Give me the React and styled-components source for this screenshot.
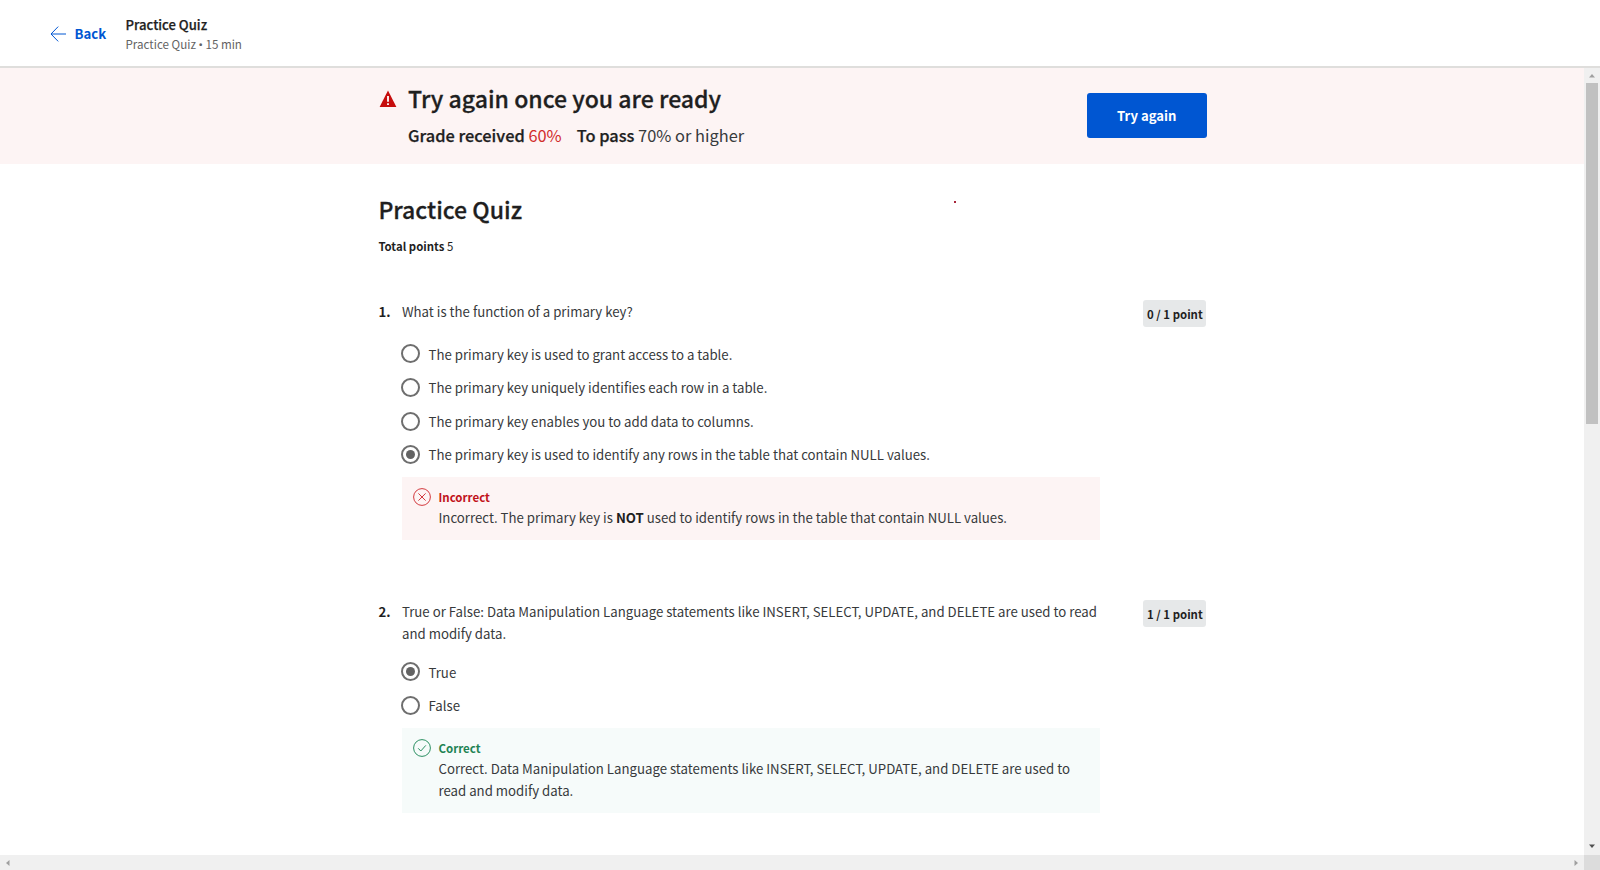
import React from "react";
import styled, { createGlobalStyle } from "styled-components";

const Global = createGlobalStyle`
  *, *::before, *::after { box-sizing: border-box; }
  body {
    margin: 0;
    background: #fff;
    color: #1f1f1f;
    font-family: "Noto Sans CJK SC", "Source Sans Pro", sans-serif;
  }
  h1, h2, p, ol, ul { margin: 0; padding: 0; }
  ol, ul { list-style: none; }
  strong { font-weight: 700; color: #1f1f1f; }
`;

const Window = styled.div`
  display: flex;
  flex-direction: column;
  width: 1600px;
  height: 870px;
  overflow: hidden;
`;

const Header = styled.header`
  display: flex;
  align-items: center;
  flex: none;
  height: 68px;
  padding-left: 49.5px;
  border-bottom: 2px solid #dfdedc;
`;

const BackLink = styled.a`
  display: flex;
  align-items: center;
  width: 76px;
  gap: 9px;
  padding-top: 1.2px;
  color: #0056d2;
  font-size: 13.2px;
  font-weight: 700;
  line-height: 20px;
`;

const HeaderTitles = styled.div`
  display: flex;
  flex-direction: column;
  padding-top: 2px;
`;

const HeaderTitle = styled.span`
  font-size: 13.1px;
  font-weight: 500;
  line-height: 20px;
  -webkit-text-stroke: 0.25px currentColor;
`;

const HeaderMeta = styled.span`
  color: #636363;
  font-size: 11.6px;
  line-height: 19px;
`;

const Bullet = styled.span`
  font-family: "Noto Sans", sans-serif;
`;

const Body = styled.div`
  display: flex;
  flex: none;
  height: 787px;
`;

const Page = styled.main`
  flex: 1;
  min-width: 0;
  position: relative;
  overflow: hidden;
`;

const Banner = styled.section`
  height: 96px;
  padding: 15px 0 0 379px;
  background: #fdf4f4;
`;

const BannerInner = styled.div`
  display: flex;
  width: 827.5px;
`;

const BannerIcon = styled.div`
  width: 29px;
  padding-top: 7px;
  line-height: 0;
`;

const BannerText = styled.div`
  flex: 1;
`;

const Heading = styled.h2`
  font-size: 23.05px;
  font-weight: 500;
  line-height: 30px;
  -webkit-text-stroke: 0.3px currentColor;
`;

const Grades = styled.p`
  display: flex;
  gap: 15px;
  margin-top: 10px;
  font-size: 16.4px;
  line-height: 24px;
  color: #373a3c;
`;

const Label = styled.span`
  color: #1f1f1f;
  font-weight: 500;
  -webkit-text-stroke: 0.25px currentColor;
`;

const Score = styled.span`
  color: #d12b2b;
`;

const RetryButton = styled.button`
  width: 119.5px;
  height: 44.5px;
  margin-top: 10px;
  padding: 0;
  border: 0;
  border-radius: 3px;
  background: #0056d2;
  color: #fff;
  font-family: inherit;
  font-size: 13.1px;
  font-weight: 700;
`;

const Quiz = styled.section`
  width: 828px;
  margin-left: 378.4px;
  padding-top: 30px;
`;

const TotalPoints = styled.p`
  margin-top: 12px;
  margin-bottom: 45px;
  font-size: 11.4px;
  line-height: 20px;
`;

const Question = styled.li`
  display: flex;
  align-items: flex-start;
  margin-bottom: 61px;
`;

const Number = styled.span`
  width: 23.6px;
  font-size: 13.2px;
  font-weight: 700;
  line-height: 22px;
`;

const QuestionBody = styled.div`
  width: 698px;
`;

const Prompt = styled.p`
  font-size: 13.23px;
  line-height: 22px;
  color: #373a3c;
`;

const Options = styled.ul`
  margin-top: ${(p) => p.$gap}px;
`;

const Option = styled.li`
  display: flex;
  align-items: center;
  gap: 8.5px;
  height: 33.6px;
  margin-left: -1px;
  font-size: 13.24px;
  line-height: 22px;
  color: #373a3c;
`;

const OptionText = styled.span`
  padding-top: 1.2px;
`;

const Radio = styled.span`
  flex: none;
  display: grid;
  place-items: center;
  width: 19px;
  height: 19px;
  border: 2px solid #6e6e6e;
  border-radius: 50%;

  &::after {
    content: "";
    width: 9px;
    height: 9px;
    border-radius: 50%;
    background: ${(p) => (p.$checked ? "#636363" : "transparent")};
  }
`;

const Feedback = styled.div`
  display: flex;
  gap: 7.5px;
  margin-top: 5.6px;
  padding: 9.9px 20px 11px 11px;
  background: ${(p) => (p.$correct ? "#f6fbfa" : "#fdf4f4")};
`;

const FeedbackIcon = styled.div`
  flex: none;
  width: 18px;
  height: 20px;
  padding-top: 1px;
  line-height: 0;
`;

const FeedbackTitle = styled.p`
  color: ${(p) => (p.$correct ? "#1f8354" : "#c1121a")};
  font-size: 11.5px;
  font-weight: 700;
  line-height: 20px;
`;

const Points = styled.span`
  display: flex;
  align-items: center;
  justify-content: center;
  width: 63px;
  height: 27px;
  margin: -1px 0 0 auto;
  border-radius: 3px;
  background: #e6e8e9;
  font-size: 11.4px;
  font-weight: 700;
  white-space: nowrap;
`;

const RedMark = styled.i`
  position: absolute;
  left: 954px;
  top: 133px;
  width: 2px;
  height: 2px;
  background: #a8263a;
`;

const VerticalBar = styled.div`
  display: flex;
  flex-direction: column;
  align-items: center;
  width: 16px;
  padding-bottom: 1.5px;
  background: #f0f0f0;
`;

const Thumb = styled.div`
  width: 12px;
  height: 341px;
  margin-bottom: auto;
  background: #c1c1c1;
`;

const ArrowCell = styled.span`
  display: grid;
  place-items: center;
  width: 16px;
  height: 15px;
`;

const HorizontalBar = styled.div`
  display: flex;
  flex: none;
  justify-content: space-between;
  height: 15px;
  background: #f0f0f0;
`;

const BarEnd = styled.div`
  display: flex;
`;

const Corner = styled.span`
  width: 16px;
  height: 15px;
  background: #dcdcdc;
`;

const ArrowLeft = () => (
  <svg width="16" height="16" viewBox="0 0 16 16" fill="none" stroke="#0056d2" strokeWidth="1">
    <path d="M8.2 0.6 1 8l7.2 7.4M1 8h15" />
  </svg>
);

const Warning = () => (
  <svg width="18" height="18" viewBox="0 0 18 18">
    <path d="M9 .6 17.4 17H.6Z" fill="#c60c0c" />
    <path d="M8.1 6h1.8v5.8H8.1zM8.1 13.2h1.8V15H8.1z" fill="#fff" />
  </svg>
);

const StatusIcon = ({ correct }) => (
  <svg width="18" height="18" viewBox="0 0 18 18" fill="none" stroke={correct ? "#2b8f62" : "#d33a3f"} strokeWidth="1">
    <circle cx="9" cy="9" r="8.4" />
    <path d={correct ? "M5.2 9.3 7.8 12l5-5.6" : "m5.4 5.4 7.2 7.2M12.6 5.4l-7.2 7.2"} />
  </svg>
);

const arrows = {
  up: "M1 5.5 4 2l3 3.5Z",
  down: "M1 2.5h6L4 6Z",
  left: "M5.5 1v6L2 4Z",
  right: "M2.5 1v6L6 4Z",
};

const BarArrow = ({ dir, color = "#a0a0a0" }) => (
  <ArrowCell>
    <svg width="8" height="8" viewBox="0 0 8 8"><path d={arrows[dir]} fill={color} /></svg>
  </ArrowCell>
);

const questions = [
  {
    prompt: "What is the function of a primary key?",
    points: "0 / 1 point",
    gap: 14.2,
    options: [
      "The primary key is used to grant access to a table.",
      "The primary key uniquely identifies each row in a table.",
      "The primary key enables you to add data to columns.",
      "The primary key is used to identify any rows in the table that contain NULL values.",
    ],
    selected: 3,
    correct: false,
    feedback: (
      <>
        Incorrect. The primary key is <strong>NOT</strong> used to identify rows in the table that contain NULL values.
      </>
    ),
  },
  {
    prompt:
      "True or False: Data Manipulation Language statements like INSERT, SELECT, UPDATE, and DELETE are used to read and modify data.",
    points: "1 / 1 point",
    gap: 10.1,
    options: ["True", "False"],
    selected: 0,
    correct: true,
    feedback:
      "Correct. Data Manipulation Language statements like INSERT, SELECT, UPDATE, and DELETE are used to read and modify data.",
  },
];

export default function App() {
  return (
    <Window>
      <Global />
      <Header>
        <BackLink>
          <ArrowLeft />
          Back
        </BackLink>
        <HeaderTitles>
          <HeaderTitle>Practice Quiz</HeaderTitle>
          <HeaderMeta>
            Practice Quiz <Bullet>•</Bullet> 15 min
          </HeaderMeta>
        </HeaderTitles>
      </Header>
      <Body>
        <Page>
          <Banner>
            <BannerInner>
              <BannerIcon>
                <Warning />
              </BannerIcon>
              <BannerText>
                <Heading>Try again once you are ready</Heading>
                <Grades>
                  <span>
                    <Label>Grade received</Label> <Score>60%</Score>
                  </span>
                  <span>
                    <Label>To pass</Label> 70% or higher
                  </span>
                </Grades>
              </BannerText>
              <RetryButton>Try again</RetryButton>
            </BannerInner>
          </Banner>
          <Quiz>
            <Heading as="h1">Practice Quiz</Heading>
            <TotalPoints>
              <strong>Total points</strong> 5
            </TotalPoints>
            <ol>
              {questions.map((q, i) => (
                <Question key={q.prompt}>
                  <Number>{i + 1}.</Number>
                  <QuestionBody>
                    <Prompt>{q.prompt}</Prompt>
                    <Options $gap={q.gap}>
                      {q.options.map((text, j) => (
                        <Option key={text}>
                          <Radio $checked={j === q.selected} />
                          <OptionText>{text}</OptionText>
                        </Option>
                      ))}
                    </Options>
                    <Feedback $correct={q.correct}>
                      <FeedbackIcon>
                        <StatusIcon correct={q.correct} />
                      </FeedbackIcon>
                      <div>
                        <FeedbackTitle $correct={q.correct}>{q.correct ? "Correct" : "Incorrect"}</FeedbackTitle>
                        <Prompt>{q.feedback}</Prompt>
                      </div>
                    </Feedback>
                  </QuestionBody>
                  <Points>{q.points}</Points>
                </Question>
              ))}
            </ol>
          </Quiz>
          <RedMark />
        </Page>
        <VerticalBar>
          <BarArrow dir="up" />
          <Thumb />
          <BarArrow dir="down" color="#505050" />
        </VerticalBar>
      </Body>
      <HorizontalBar>
        <BarArrow dir="left" />
        <BarEnd>
          <BarArrow dir="right" />
          <Corner />
        </BarEnd>
      </HorizontalBar>
    </Window>
  );
}
